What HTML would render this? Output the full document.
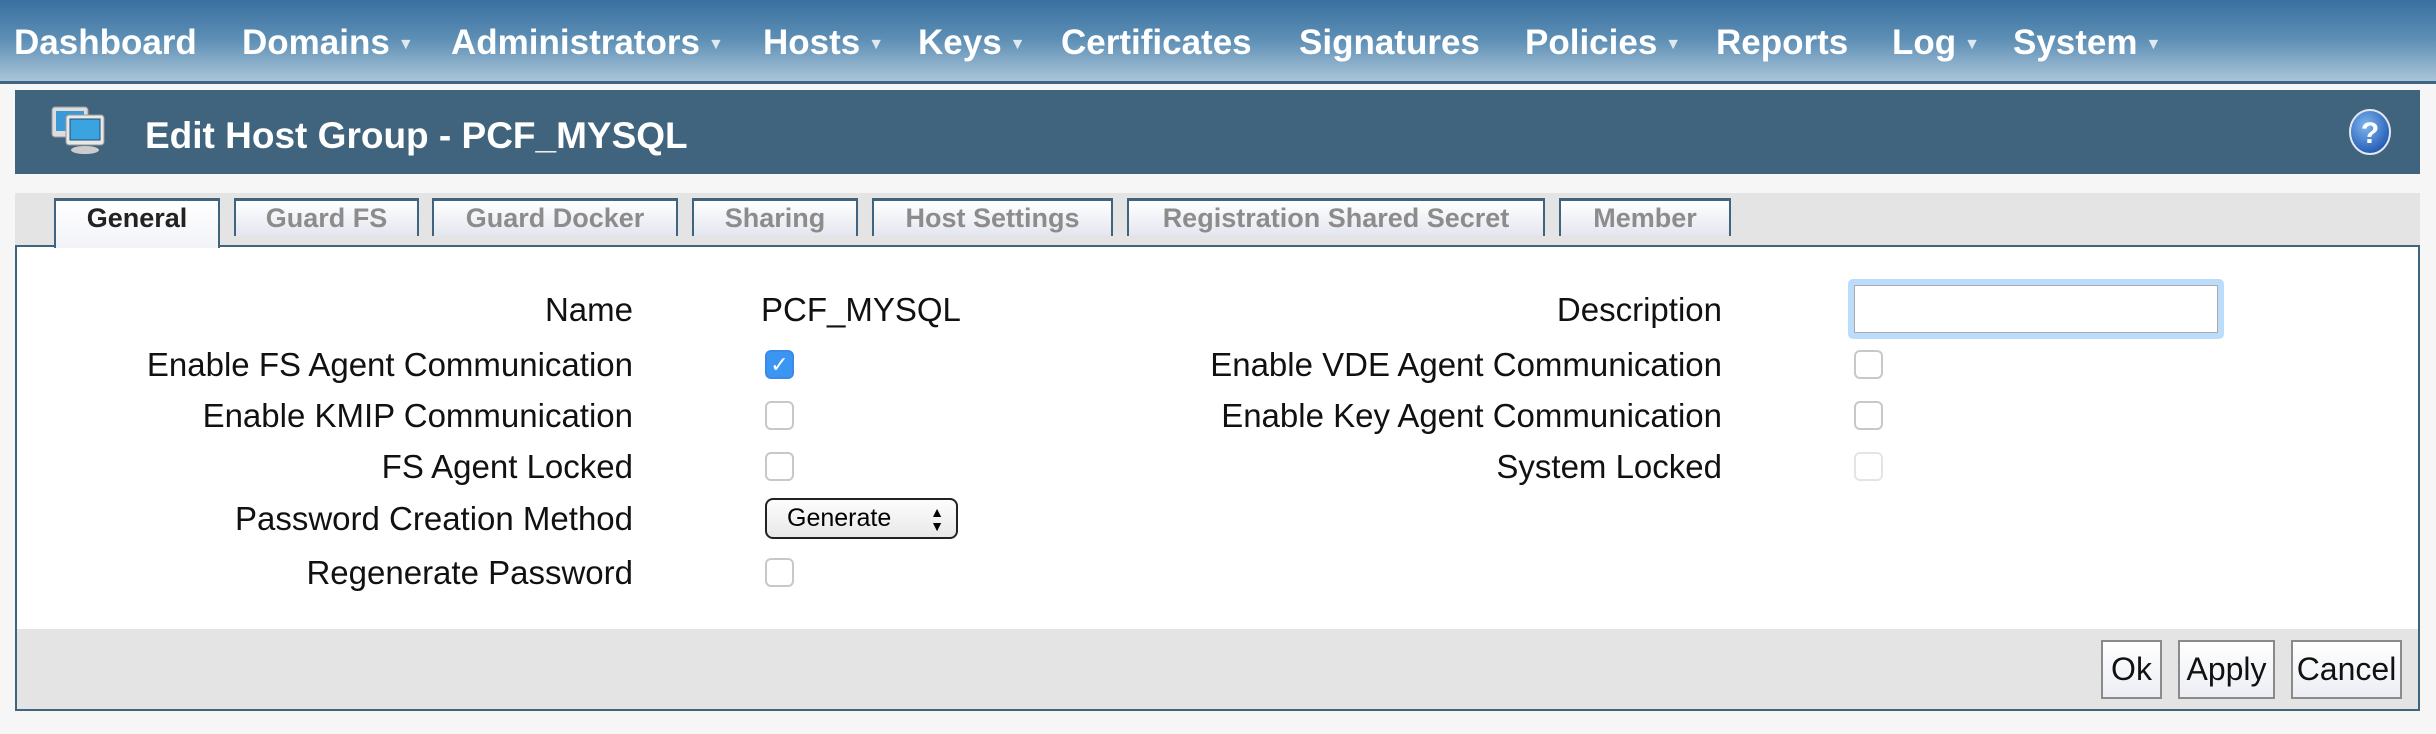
<!DOCTYPE html>
<html><head><meta charset="utf-8"><style>
*{margin:0;padding:0;box-sizing:border-box}
body{width:2436px;height:734px;background:#f6f6f6;position:relative;overflow:hidden;font-family:"Liberation Sans",Arial,sans-serif}
.nav{position:absolute;left:0;top:0;width:2436px;height:84px;background:linear-gradient(#3870a0,#5f90b6 50%,#abc5d8);border-bottom:3px solid #3f6584}
.nav span{position:absolute;top:23px;color:#fff;font-weight:bold;font-size:35px;white-space:nowrap}
.nav i{font-style:normal;font-size:16px;color:#dde8f0;margin-left:8px;vertical-align:middle}
.hdr{position:absolute;left:15px;top:90px;width:2405px;height:84px;background:#41647e}
.hdr .t{position:absolute;left:130px;top:25px;color:#fff;font-weight:bold;font-size:37px}
.tabbar{position:absolute;left:15px;top:193px;width:2405px;height:54px;background:#e4e4e4}
.tab{position:absolute;top:198px;height:38px;border:2px solid #41647e;border-bottom:none;border-top-width:3px;background:linear-gradient(#fff,#e4e6ef);color:#8c8c8c;font-weight:bold;font-size:27px;text-align:center;line-height:34px;white-space:nowrap}
.tab.a{color:#222;height:50px;background:linear-gradient(#fff,#f2f3f8);z-index:2}
.box{position:absolute;left:15px;top:245px;width:2405px;height:466px;border:2px solid #41647e;background:#fff}
.foot{position:absolute;left:0;right:0;bottom:0;height:80px;background:#e4e4e4}
.l{position:absolute;font-size:33px;color:#111;text-align:right;white-space:nowrap}
.cb{position:absolute;width:29px;height:29px;border:2px solid #c8c8c8;border-radius:6px;background:#fff}
.btn{position:absolute;top:640px;height:59px;border:2px solid #8a8a8a;background:linear-gradient(#fff,#eceef4);font-size:32px;text-align:center;line-height:55px;color:#111}
</style></head><body>
<div class="nav">
<span style="left:14px">Dashboard</span>
<span style="left:242px">Domains<i>▼</i></span>
<span style="left:451px">Administrators<i>▼</i></span>
<span style="left:763px">Hosts<i>▼</i></span>
<span style="left:918px">Keys<i>▼</i></span>
<span style="left:1061px">Certificates</span>
<span style="left:1299px">Signatures</span>
<span style="left:1525px">Policies<i>▼</i></span>
<span style="left:1716px">Reports</span>
<span style="left:1892px">Log<i>▼</i></span>
<span style="left:2013px">System<i>▼</i></span>
</div>
<div class="hdr">
<svg style="position:absolute;left:35px;top:15px" width="56" height="50" viewBox="0 0 56 50">
<rect x="2" y="2" width="36" height="30" rx="3" fill="#ddd" stroke="#999"/><rect x="6" y="6" width="28" height="20" fill="#3a9ad8"/>
<rect x="16" y="10" width="38" height="30" rx="3" fill="#e8e8e8" stroke="#999"/><rect x="20" y="14" width="30" height="21" fill="#3aa4e0" stroke="#1f4f78"/>
<ellipse cx="35" cy="45" rx="14" ry="4" fill="#ccc"/>
</svg>
<div class="t">Edit Host Group - PCF_MYSQL</div>
<svg style="position:absolute;left:2332px;top:17px" width="46" height="50" viewBox="0 0 46 50">
<defs><radialGradient id="g" cx="0.4" cy="0.35" r="0.7"><stop offset="0" stop-color="#7fb6f0"/><stop offset="1" stop-color="#1d55b0"/></radialGradient></defs>
<ellipse cx="23" cy="25" rx="20" ry="22" fill="url(#g)" stroke="#e0e8f0" stroke-width="2"/>
<text x="23" y="36" font-family="Liberation Sans" font-weight="bold" font-size="30" fill="#fff" text-anchor="middle">?</text>
</svg>
</div>
<div class="tabbar"></div>
<div class="tab a" style="left:54px;width:166px">General</div>
<div class="tab" style="left:234px;width:185px">Guard FS</div>
<div class="tab" style="left:432px;width:246px">Guard Docker</div>
<div class="tab" style="left:692px;width:166px">Sharing</div>
<div class="tab" style="left:872px;width:241px">Host Settings</div>
<div class="tab" style="left:1127px;width:418px">Registration Shared Secret</div>
<div class="tab" style="left:1559px;width:172px">Member</div>
<div class="box"><div class="foot"></div></div>

<div class="l" style="right:1803px;top:291px">Name</div>
<div class="l" style="right:1803px;top:346px">Enable FS Agent Communication</div>
<div class="l" style="right:1803px;top:397px">Enable KMIP Communication</div>
<div class="l" style="right:1803px;top:448px">FS Agent Locked</div>
<div class="l" style="right:1803px;top:500px">Password Creation Method</div>
<div class="l" style="right:1803px;top:554px">Regenerate Password</div>
<div class="l" style="left:761px;top:291px;text-align:left">PCF_MYSQL</div>
<div class="cb" style="left:765px;top:350px;background:#3b95f3;border-color:#3b8ae6;color:#fff;font-size:22px;line-height:25px;text-align:center">✓</div>
<div class="cb" style="left:765px;top:401px"></div>
<div class="cb" style="left:765px;top:452px"></div>
<div style="position:absolute;left:765px;top:498px;width:193px;height:41px;border:2px solid #222;border-radius:8px;background:linear-gradient(#fdfdfd,#e8e8e8);font-size:25px;line-height:37px;padding-left:20px">Generate<span style="position:absolute;right:12px;top:0;font-size:14px;line-height:14px;padding-top:5px">▲<br>▼</span></div>
<div class="cb" style="left:765px;top:558px"></div>

<div class="l" style="right:714px;top:291px">Description</div>
<div class="l" style="right:714px;top:346px">Enable VDE Agent Communication</div>
<div class="l" style="right:714px;top:397px">Enable Key Agent Communication</div>
<div class="l" style="right:714px;top:448px">System Locked</div>
<div style="position:absolute;left:1848px;top:279px;width:376px;height:60px;border:6px solid #bcdcfb;border-radius:5px;background:#fff;box-shadow:inset 0 0 0 1px #aaa"></div>
<div class="cb" style="left:1854px;top:350px"></div>
<div class="cb" style="left:1854px;top:401px"></div>
<div class="cb" style="left:1854px;top:452px;border-color:#e4e4e4"></div>

<div class="btn" style="left:2101px;width:61px">Ok</div>
<div class="btn" style="left:2178px;width:97px">Apply</div>
<div class="btn" style="left:2291px;width:111px">Cancel</div>
</body></html>
